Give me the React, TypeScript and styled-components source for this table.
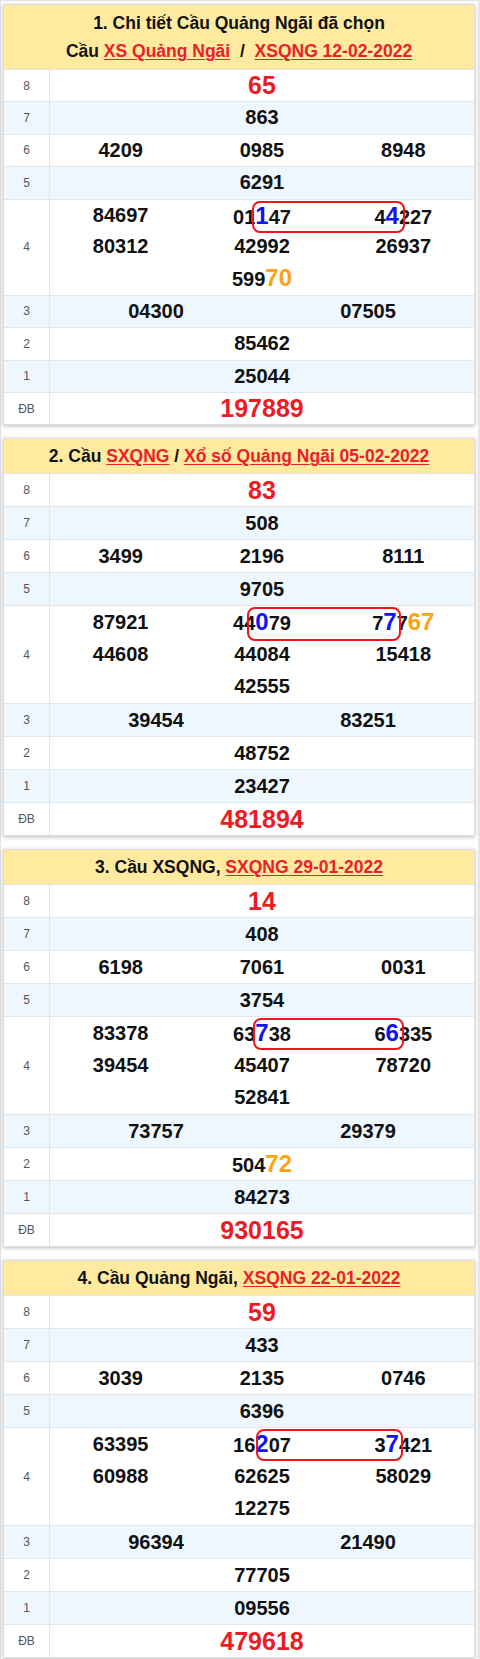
import React from "react";
import styled, { createGlobalStyle } from "styled-components";

const Global = createGlobalStyle`
  html, body { margin: 0; padding: 0; background: #fff; }
  body { font-family: "Liberation Sans", Arial, sans-serif; }
`;

const Page = styled.div`
  width: 480px;
  box-sizing: border-box;
  border-top: 1px solid #e2e2e2;
  border-left: 1px solid #e2e2e2;
  border-right: 2px solid #e6e6e6;
  padding: 3px 3px 5px 2px;
  display: flex;
  flex-direction: column;
  gap: 13px;
`;

const Table = styled.section`
  border: 1px solid #e0e0e0;
  box-shadow: 0 1px 4px rgba(0, 0, 0, 0.28);
  background: #fff;
`;

const Header = styled.div<{ $double?: boolean }>`
  background: #ffeaa0;
  text-align: center;
  font-weight: bold;
  font-size: 17.5px;
  line-height: 28px;
  color: #111;
  padding: ${(p) => (p.$double ? "4px 0 4px" : "3px 0 3px")};
  border-bottom: 1px solid #e3e3e3;
`;

const HeaderLine = styled.div``;

const Link = styled.a`
  color: #e8212a;
  text-decoration: underline;
  text-underline-offset: 2px;
`;

const Row = styled.div<{ $alt?: boolean }>`
  display: flex;
  background: ${(p) => (p.$alt ? "#eef6fe" : "#fff")};
  border-bottom: 1px solid #dfe6ee;
  &:last-child { border-bottom: none; }
`;

const Label = styled.div`
  width: 45px;
  flex: none;
  border-right: 1px solid #dfe6ee;
  display: flex;
  align-items: center;
  justify-content: center;
  font-size: 12px;
  color: #555;
`;

const Cells = styled.div<{ $cols: number; $tall?: boolean; $line: number }>`
  position: relative;
  flex: 1;
  display: grid;
  grid-template-columns: repeat(${(p) => p.$cols}, 1fr);
  grid-auto-rows: ${(p) => p.$line}px;
  line-height: ${(p) => p.$line}px;
  padding-bottom: ${(p) => (p.$tall ? "1px" : "0")};
  & > :nth-child(7) { grid-column: 2; }
`;

const Num = styled.div`
  text-align: center;
  font-weight: bold;
  font-size: 20px;
  color: #111;
  white-space: nowrap;
`;

const Special = styled.span`
  color: #ec1c24;
  font-size: 25px;
`;

const Blue = styled.span`
  color: #1212f5;
  font-size: 24px;
`;

const Orange = styled.span`
  color: #fca311;
  font-size: 24px;
`;

const Box = styled.div`
  position: absolute;
  border: 2px solid #f0141c;
  border-radius: 8px;
  box-sizing: border-box;
  pointer-events: none;
`;

type RowData = { label: string; nums: string[]; special?: boolean };
type TableData = {
  header: React.ReactNode;
  double?: boolean;
  line: number;
  rows: RowData[];
  box: { left: number; width: number; top: number; height: number };
};

function renderNum(s: string) {
  const parts: React.ReactNode[] = [];
  const re = /\[([^\]]+)\]|\{([^}]+)\}|([^[{]+)/g;
  let m: RegExpExecArray | null;
  let k = 0;
  while ((m = re.exec(s))) {
    if (m[1]) parts.push(<Blue key={k++}>{m[1]}</Blue>);
    else if (m[2]) parts.push(<Orange key={k++}>{m[2]}</Orange>);
    else parts.push(<React.Fragment key={k++}>{m[3]}</React.Fragment>);
  }
  return parts;
}

const mk = (
  g8: string,
  g7: string,
  g6: string[],
  g5: string,
  g4: string[],
  g3: string[],
  g2: string,
  g1: string,
  db: string
): RowData[] => [
  { label: "8", nums: [g8], special: true },
  { label: "7", nums: [g7] },
  { label: "6", nums: g6 },
  { label: "5", nums: [g5] },
  { label: "4", nums: g4 },
  { label: "3", nums: g3 },
  { label: "2", nums: [g2] },
  { label: "1", nums: [g1] },
  { label: "ĐB", nums: [db], special: true },
];

const tables: TableData[] = [
  {
    double: true,
    line: 31.4,
    header: (
      <>
        <HeaderLine>1. Chi tiết Cầu Quảng Ngãi đã chọn</HeaderLine>
        <HeaderLine>
          Cầu <Link>XS Quảng Ngãi</Link>&nbsp; / &nbsp;<Link>XSQNG 12-02-2022</Link>
        </HeaderLine>
      </>
    ),
    rows: mk(
      "65",
      "863",
      ["4209", "0985", "8948"],
      "6291",
      ["84697", "01[1]47", "4[4]227", "80312", "42992", "26937", "599{70}"],
      ["04300", "07505"],
      "85462",
      "25044",
      "197889"
    ),
    box: { left: 202, width: 153, top: 1, height: 32 },
  },
  {
    line: 32,
    header: (
      <HeaderLine>
        2. Cầu <Link>SXQNG</Link> / <Link>Xổ số Quảng Ngãi 05-02-2022</Link>
      </HeaderLine>
    ),
    rows: mk(
      "83",
      "508",
      ["3499", "2196", "8111"],
      "9705",
      ["87921", "44[0]79", "7[7]7{67}", "44608", "44084", "15418", "42555"],
      ["39454", "83251"],
      "48752",
      "23427",
      "481894"
    ),
    box: { left: 197, width: 154, top: 1, height: 34 },
  },
  {
    line: 32,
    header: (
      <HeaderLine>
        3. Cầu XSQNG, <Link>SXQNG 29-01-2022</Link>
      </HeaderLine>
    ),
    rows: mk(
      "14",
      "408",
      ["6198", "7061", "0031"],
      "3754",
      ["83378", "63[7]38", "6[6]335", "39454", "45407", "78720", "52841"],
      ["73757", "29379"],
      "504{72}",
      "84273",
      "930165"
    ),
    box: { left: 203, width: 151, top: 1, height: 32 },
  },
  {
    line: 32,
    header: (
      <HeaderLine>
        4. Cầu Quảng Ngãi, <Link>XSQNG 22-01-2022</Link>
      </HeaderLine>
    ),
    rows: mk(
      "59",
      "433",
      ["3039", "2135", "0746"],
      "6396",
      ["63395", "16[2]07", "3[7]421", "60988", "62625", "58029", "12275"],
      ["96394", "21490"],
      "77705",
      "09556",
      "479618"
    ),
    box: { left: 206, width: 147, top: 1, height: 32 },
  },
];

export default function App() {
  return (
    <>
      <Global />
      <Page>
        {tables.map((t, ti) => (
          <Table key={ti}>
            <Header $double={t.double}>{t.header}</Header>
            {t.rows.map((r, ri) => {
              const tall = r.label === "4";
              return (
                <Row key={ri} $alt={ri % 2 === 1}>
                  <Label>{r.label}</Label>
                  <Cells
                    $cols={r.nums.length > 3 ? 3 : r.nums.length}
                    $tall={tall}
                    $line={t.line}
                  >
                    {r.nums.map((n, ni) => (
                      <Num key={ni}>
                        {r.special ? <Special>{n}</Special> : renderNum(n)}
                      </Num>
                    ))}
                    {tall && (
                      <Box
                        style={{
                          left: t.box.left,
                          width: t.box.width,
                          top: t.box.top,
                          height: t.box.height,
                        }}
                      />
                    )}
                  </Cells>
                </Row>
              );
            })}
          </Table>
        ))}
      </Page>
    </>
  );
}
